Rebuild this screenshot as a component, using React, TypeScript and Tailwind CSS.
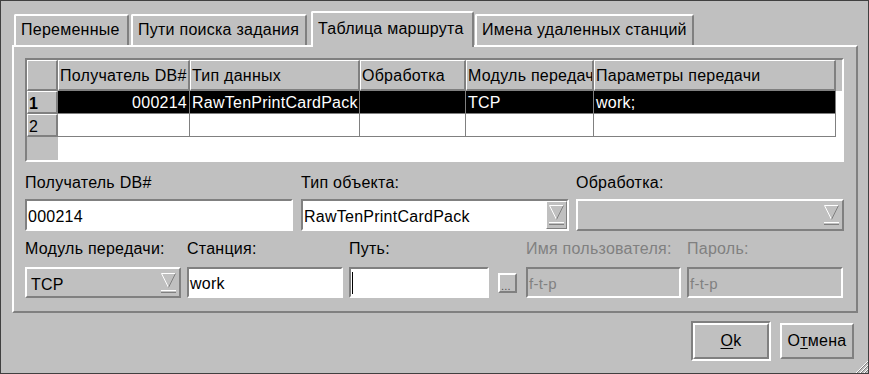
import React from "react";

const raised =
  "border-2 border-t-white border-l-white border-b-[#808080] border-r-[#808080]";
const sunken =
  "border-2 border-t-[#808080] border-l-[#808080] border-b-white border-r-white";
const headBevel =
  "border-t border-l border-t-white border-l-white border-b-2 border-r-2 border-b-[#808080] border-r-[#808080]";

const columns = [
  { title: "Получатель DB#", w: "w-[132px]" },
  { title: "Тип данных", w: "w-[170px]" },
  { title: "Обработка", w: "w-[106px]" },
  { title: "Модуль передачи", w: "w-[128px]" },
  { title: "Параметры передачи", w: "w-[242px]" },
];

const rows = [
  { id: "1", cells: ["000214", "RawTenPrintCardPack", "", "TCP", "work;"], selected: true },
  { id: "2", cells: ["", "", "", "", ""], selected: false },
];

function DropArrow() {
  return (
    <svg width="15" height="20" viewBox="0 0 15 20" className="shrink-0">
      <path d="M0.5 0.5 L7.5 14.5" stroke="#ffffff" fill="none" />
      <path d="M0.5 0.5 H14.5" stroke="#ffffff" fill="none" />
      <path d="M14.5 0.5 L7.5 14.5" stroke="#808080" fill="none" />
      <rect x="0" y="17" width="15" height="1" fill="#ffffff" />
      <rect x="0" y="18" width="15" height="1" fill="#c0c0c0" />
      <rect x="0" y="19" width="15" height="1" fill="#808080" />
    </svg>
  );
}

function Tab({
  children,
  w,
  selected = false,
  className = "",
}: {
  children: React.ReactNode;
  w: string;
  selected?: boolean;
  className?: string;
}) {
  return (
    <div
      className={`${w} ${className} ${
        selected ? "relative z-10 h-[36px] -mb-[2px] pt-[7px]" : "h-[31px] pt-[5px]"
      } bg-[#c0c0c0] border-t-2 border-l-2 border-r-2 border-t-white border-l-white border-r-[#808080] rounded-t-[2px] pl-[5px] whitespace-nowrap overflow-hidden`}
    >
      {children}
    </div>
  );
}

function RouteTable() {
  return (
    <div className={`w-[819px] h-[104px] ${sunken}`}>
      <div className="flex flex-col h-full bg-white">
        <div className="flex h-[31px] bg-[#c0c0c0] shrink-0">
          <div className={`w-[31px] ${headBevel}`}></div>
          {columns.map((c) => (
            <div
              key={c.title}
              className={`${c.w} ${headBevel} pl-[1px] pt-[6px] whitespace-nowrap overflow-hidden`}
            >
              {c.title}
            </div>
          ))}
          <div className="flex-1"></div>
        </div>
        {rows.map((r) => (
          <div key={r.id} className="flex h-[23px] shrink-0">
            <div
              className={`w-[31px] bg-[#c0c0c0] ${headBevel} pl-[1px] pt-[3px] ${
                r.selected ? "font-bold" : ""
              }`}
            >
              {r.id}
            </div>
            {r.cells.map((v, i) => (
              <div
                key={i}
                className={`${columns[i].w} border-r border-b border-[#808080] px-[2px] pt-[3px] whitespace-nowrap overflow-hidden ${
                  r.selected ? "bg-black text-white" : "bg-white"
                } ${i === 0 ? "text-right" : ""}`}
              >
                {v}
              </div>
            ))}
            <div className="flex-1"></div>
          </div>
        ))}
        <div className="flex flex-1">
          <div className="w-[31px] bg-[#c0c0c0]"></div>
          <div className="flex-1"></div>
        </div>
      </div>
    </div>
  );
}

export default function App() {
  return (
    <div className="relative w-[869px] h-[374px] bg-[#c0c0c0] border border-[#404040] pt-[10px] pl-[11px] font-['Liberation_Sans',Arial,sans-serif] text-[16px] leading-[18px] tracking-[0.25px] text-black overflow-hidden">
      <div className="flex items-end h-[34px] pl-[2px]">
        <Tab w="w-[115px]">Переменные</Tab>
        <Tab w="w-[176px]" className="ml-[2px]">
          Пути поиска задания
        </Tab>
        <Tab w="w-[163px]" className="ml-[4px]" selected>
          Таблица маршрута
        </Tab>
        <Tab w="w-[219px]" className="ml-[1px]">
          Имена удаленных станций
        </Tab>
      </div>

      <div className="w-[846px] h-[268px] border-2 border-t-white border-l-white border-b-[#808080] border-r-[#808080] pt-[11px] pl-[11px]">
        <RouteTable />

        <div className="flex mt-[12px] gap-[7px]">
          <div className="w-[268px]">
            <div className="h-[18px]">Получатель DB#</div>
            <div className={`mt-[7px] h-[32px] bg-white ${sunken} pt-[7px] pl-[1px]`}>000214</div>
          </div>
          <div className="w-[268px] ml-[1px]">
            <div className="h-[18px]">Тип объекта:</div>
            <div className={`mt-[7px] h-[32px] ${sunken} flex`}>
              <div className="flex-1 bg-white pt-[7px] pl-[1px] whitespace-nowrap">
                RawTenPrintCardPack
              </div>
              <div className="w-[21px] border border-t-white border-l-white border-b-[#808080] border-r-[#808080] flex items-center justify-center">
                <DropArrow />
              </div>
            </div>
          </div>
          <div className="w-[268px]">
            <div className="h-[18px]">Обработка:</div>
            <div className={`mt-[7px] h-[32px] ${raised} flex items-center justify-end pr-[3px]`}>
              <DropArrow />
            </div>
          </div>
        </div>

        <div className="flex mt-[9px]">
          <div className="w-[156px]">
            <div className="h-[18px]">Модуль передачи:</div>
            <div className={`mt-[9px] h-[31px] ${raised} flex items-center pl-[4px] pr-[3px]`}>
              <span className="flex-1 pt-[4px]">TCP</span>
              <DropArrow />
            </div>
          </div>
          <div className="w-[156px] ml-[6px]">
            <div className="h-[18px]">Станция:</div>
            <div className={`mt-[9px] h-[31px] bg-white ${sunken} pt-[6px] pl-[1px]`}>work</div>
          </div>
          <div className="ml-[6px]">
            <div className="h-[18px]">Путь:</div>
            <div className="mt-[9px] flex items-center">
              <div className={`w-[140px] h-[31px] bg-white ${sunken} pl-[1px] flex items-center`}>
                <div className="w-px h-[22px] bg-black"></div>
              </div>
              <div
                className={`ml-[9px] w-[19px] h-[20px] ${raised} flex items-end pl-[1px] text-[11px] leading-[10px] text-[#505050]`}
              >
                ...
              </div>
            </div>
          </div>
          <div className="w-[155px] ml-[9px] text-[#808080]">
            <div className="h-[18px]">Имя пользователя:</div>
            <div className={`mt-[9px] h-[31px] ${sunken} pt-[6px] pl-[1px] text-[15px]`}>f-t-p</div>
          </div>
          <div className="w-[156px] ml-[6px] text-[#808080]">
            <div className="h-[18px]">Пароль:</div>
            <div className={`mt-[9px] h-[31px] ${sunken} pt-[6px] pl-[1px] text-[15px]`}>f-t-p</div>
          </div>
        </div>
      </div>

      <div className="flex justify-end items-center h-[40px] mt-[8px] pr-[14px]">
        <div className={`w-[80px] h-[40px] ${sunken}`}>
          <div className={`w-full h-full ${raised} flex items-center justify-center`}>
            <span>
              <span className="underline underline-offset-2">O</span>k
            </span>
          </div>
        </div>
        <div className={`ml-[9px] w-[74px] h-[36px] ${raised} flex items-center justify-center`}>
          <span>
            О<span className="underline underline-offset-2">т</span>мена
          </span>
        </div>
      </div>

      <svg width="13" height="13" viewBox="0 0 13 13" className="absolute right-0 bottom-0">
        <path d="M1 13 L13 1" stroke="#ffffff" />
        <path d="M2 13 L13 2" stroke="#808080" />
        <path d="M5 13 L13 5" stroke="#ffffff" />
        <path d="M6 13 L13 6" stroke="#808080" />
        <path d="M9 13 L13 9" stroke="#ffffff" />
        <path d="M10 13 L13 10" stroke="#808080" />
      </svg>
    </div>
  );
}
